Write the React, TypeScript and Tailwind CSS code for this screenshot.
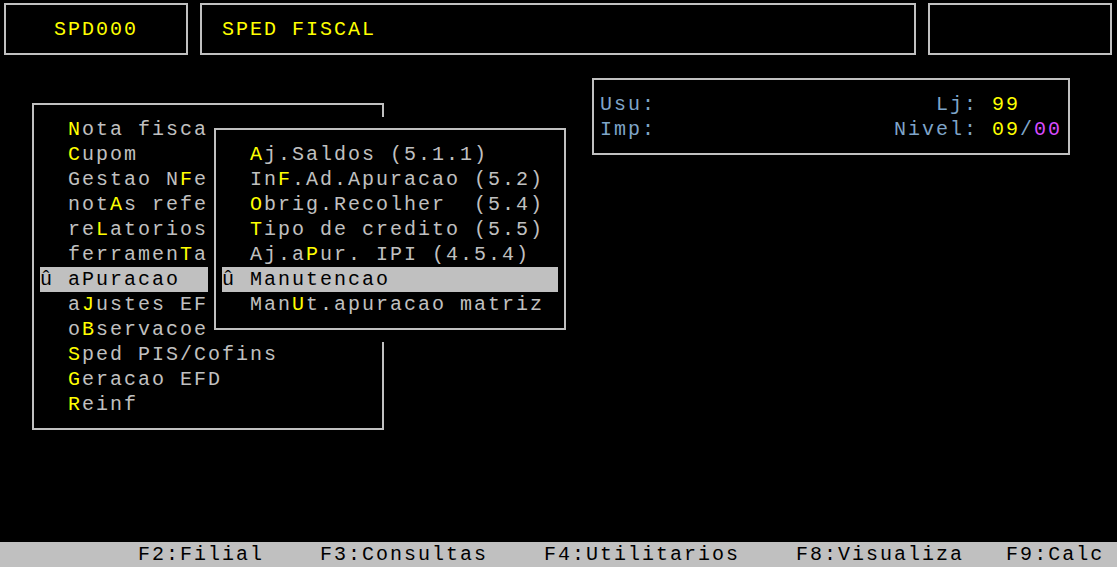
import React from "react";

// terminal grid: 14px columns, 25px rows
const mainItems = [
  "  ~Nota fisca",
  "  ~Cupom",
  "  Gestao N~Fe",
  "  not~As refe",
  "  re~Latorios",
  "  ferramen~Ta",
  "!û aPuracao",
  "  a~Justes EF",
  "  o~Bservacoe",
  "  ~Sped PIS/Cofins",
  "  ~Geracao EFD",
  "  ~Reinf",
];

const subItems = [
  "  ~Aj.Saldos (5.1.1)",
  "  In~F.Ad.Apuracao (5.2)",
  "  ~Obrig.Recolher  (5.4)",
  "  ~Tipo de credito (5.5)",
  "  Aj.a~Pur. IPI (4.5.4)",
  "!û Manutencao",
  "  Man~Ut.apuracao matriz",
];

function Label({ text }: { text: string }) {
  const parts = text.split("~");
  return (
    <>
      <span>{parts[0]}</span>
      {parts.slice(1).map((p, i) => (
        <React.Fragment key={i}>
          <span className="text-[#ffff00]">{p[0]}</span>
          <span>{p.slice(1)}</span>
        </React.Fragment>
      ))}
    </>
  );
}

function MenuRow({ item }: { item: string }) {
  if (item.startsWith("!")) {
    return <div className="h-[25px] leading-[25px] bg-[#c0c0c0] text-black">{item.slice(1)}</div>;
  }
  return (
    <div className="h-[25px] leading-[25px] text-[#c0c0c0]">
      <Label text={item} />
    </div>
  );
}

export default function App() {
  return (
    <div className="w-[1117px] h-[567px] bg-black flex flex-col overflow-hidden whitespace-pre font-['Liberation_Mono',monospace] text-[20px] tracking-[2px] text-[#c0c0c0]">
      {/* Header boxes */}
      <div className="flex gap-[12px] pl-[4px] pt-[3px] shrink-0">
        <div className="w-[184px] h-[52px] border-2 border-[#c0c0c0] flex items-center pl-[48px] text-[#ffff00] leading-[25px]">
          SPD000
        </div>
        <div className="w-[716px] h-[52px] border-2 border-[#c0c0c0] flex items-center pl-[20px] text-[#ffff00] leading-[25px]">
          SPED FISCAL
        </div>
        <div className="w-[184px] h-[52px] border-2 border-[#c0c0c0]" />
      </div>

      {/* Desktop */}
      <div className="flex items-start">
        <div className="relative ml-[32px] mt-[48px] shrink-0">
          <div className="w-[352px] h-[327px] border-2 border-[#c0c0c0] px-[6px] py-[11.5px]">
            {mainItems.map((it, i) => (
              <MenuRow key={i} item={it} />
            ))}
          </div>
          {/* Submenu window */}
          <div className="absolute left-[176px] top-[13.5px] w-[364px] h-[225px] bg-black px-[6px] py-[11.5px]">
            <div className="h-full border-2 border-[#c0c0c0] px-[6px] py-[11.5px]">
              {subItems.map((it, i) => (
                <MenuRow key={i} item={it} />
              ))}
            </div>
          </div>
        </div>

        {/* Info box */}
        <div className="ml-[208px] mt-[23px] w-[478px] h-[77px] border-2 border-[#c0c0c0] px-[6px] py-[11.5px] text-[#7fa5c9] shrink-0">
          <div className="h-[25px] leading-[25px]">
            {"Usu:                    Lj: "}
            <span className="text-[#ffff00]">99</span>
          </div>
          <div className="h-[25px] leading-[25px]">
            {"Imp:                 Nivel: "}
            <span className="text-[#ffff00]">09</span>/<span className="text-[#d94cff]">00</span>
          </div>
        </div>
      </div>

      {/* Function key bar */}
      <div className="mt-auto h-[25px] leading-[25px] bg-[#c0c0c0] text-black pl-[138px] shrink-0">
        {"F2:Filial    F3:Consultas    F4:Utilitarios    F8:Visualiza   F9:Calc"}
      </div>
    </div>
  );
}
